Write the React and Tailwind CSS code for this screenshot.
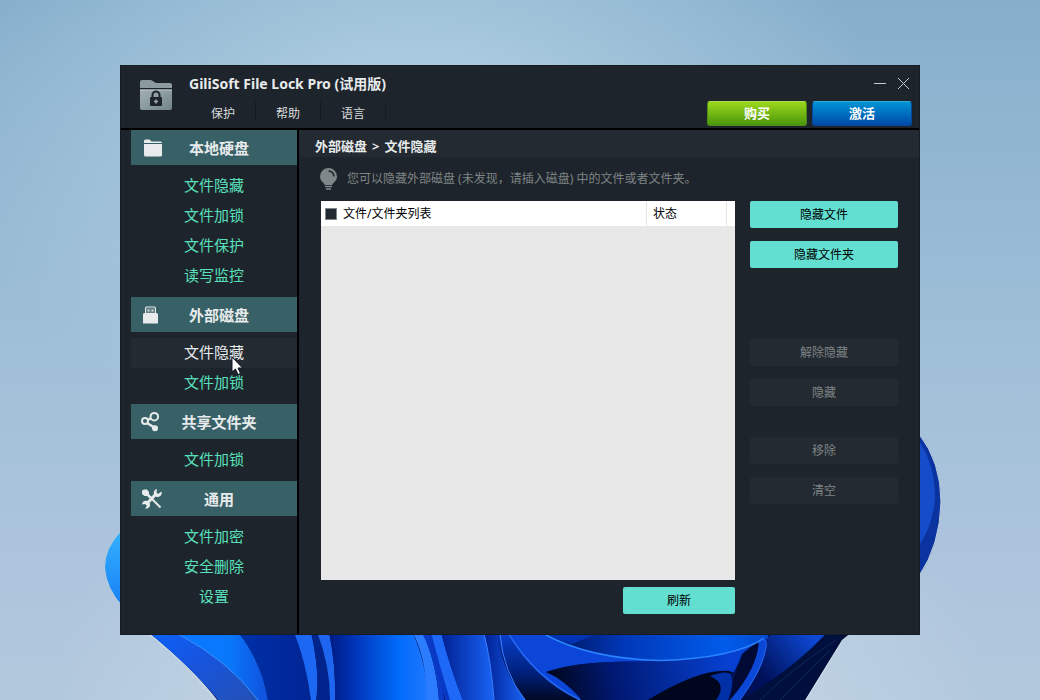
import React from "react";

const sections = [
  { title: "本地硬盘", icon: FolderIcon, items: ["文件隐藏", "文件加锁", "文件保护", "读写监控"] },
  { title: "外部磁盘", icon: UsbIcon, items: ["文件隐藏", "文件加锁"], active: 0 },
  { title: "共享文件夹", icon: ShareIcon, items: ["文件加锁"] },
  { title: "通用", icon: ToolsIcon, items: ["文件加密", "安全删除", "设置"] },
];

function FolderIcon() {
  return (
    <svg width="22" height="22" viewBox="0 0 22 22" fill="#e8ebec">
      <path d="M3 4Q3 2.500 4.500 2.500H8.500L10.500 4.500H19.500Q21 4.500 21 6H3Z" />
      <path d="M3 7H21V18Q21 19.500 19.500 19.500H4.500Q3 19.500 3 18Z" />
    </svg>
  );
}

function UsbIcon() {
  return (
    <svg width="22" height="22" viewBox="0 0 22 22" fill="#e8ebec">
      <path d="M4 10V4Q4 2.500 5.500 2.500H13.500Q15 2.500 15 4V10H14V4.500Q14 3.500 13 3.500H6Q5 3.500 5 4.500V10Z" />
      <path d="M5 4H14V9H5Z" opacity="0.25" />
      <path d="M6.500 5.500H8.500V7.500H6.500ZM10.500 5.500H12.500V7.500H10.500Z" opacity="0.8" />
      <path d="M2 10.500Q2 9 3.500 9H15.500Q17 9 17 10.500V19.500H2Z" />
    </svg>
  );
}

function ShareIcon() {
  return (
    <svg width="22" height="22" viewBox="0 0 22 22" fill="none" stroke="#e8ebec" strokeWidth="2">
      <circle cx="4" cy="10" r="3" />
      <circle cx="13.300" cy="5.700" r="3.800" />
      <circle cx="14" cy="17.300" r="3" fill="#e8ebec" stroke="none" />
      <path d="M6.500 9 10 7.300M6 12l6.500 4" strokeWidth="2.500" />
    </svg>
  );
}

function ToolsIcon() {
  return (
    <svg width="22" height="22" viewBox="0 0 22 22" fill="none" stroke="#e8ebec">
      <path d="M6 6 11.500 11.500" strokeWidth="2.500" />
      <path d="M11 11 19.500 19.500" strokeWidth="2" />
      <path d="M5.500 16 15.500 5.500" strokeWidth="3" />
      <path d="M1 3.500Q1 1.500 3.500 1.500H6L8 4V7L6.500 8H3.500L1 6Z" fill="#e8ebec" stroke="none" />
      <path d="M20.500 3.500A4 4 0 1 1 16 1L15.500 4.500 17 6Z" fill="#e8ebec" stroke="none" />
      <path d="M1 16.500A4 4 0 1 1 6.500 20.500H4L6 18 4 16Z" fill="#e8ebec" stroke="none" />
    </svg>
  );
}

function AppLogo() {
  return (
    <svg width="34" height="34" viewBox="0 0 34 34">
      <defs>
        <linearGradient id="logo" x1="0" y1="0" x2="1" y2="1">
          <stop offset="0" stopColor="#a3b0b3" />
          <stop offset="1" stopColor="#728589" />
        </linearGradient>
      </defs>
      <path d="M1 9V3Q1 1 3 1H12L17 4H31Q33 4 33 6V9Z" fill="#8c9a9e" />
      <path d="M1 10.500H33V29Q33 31 31 31H3Q1 31 1 29Z" fill="url(#logo)" />
      <path d="M1 11H33" stroke="#bcc7ca" />
      <path d="M13.500 19V16a3.500 3.500 0 0 1 7 0v3" fill="none" stroke="#1e242b" strokeWidth="2" />
      <rect x="11" y="18" width="12" height="9" rx="1" fill="#1e242b" />
      <path d="M17 20.500v4M15 22.500h4" stroke="#9cabad" strokeWidth="1.500" />
    </svg>
  );
}

function BulbIcon() {
  return (
    <svg className="shrink-0" width="19" height="24" viewBox="0 0 19 24">
      <path
        d="M9.500 1a8.500 8.500 0 0 1 8.500 8.500c0 3-1.500 4.500-3 6-1 1-1.500 1.500-1.700 2.500H5.700c-.2-1-.7-1.500-1.700-2.500-1.500-1.500-3-3-3-6A8.500 8.500 0 0 1 9.500 1Z"
        fill="#7f8789"
      />
      <path d="M9.500 4a5.500 5.500 0 0 1 5.500 5.500" fill="none" stroke="#1e242b" strokeWidth="1.500" />
      <path d="M6 19.500h7M7 22h5" stroke="#7f8789" strokeWidth="1.500" />
    </svg>
  );
}

/* Desktop background with the blue bloom */
function Wallpaper() {
  return (
    <svg className="absolute inset-0 h-full w-full" viewBox="0 0 1040 700" preserveAspectRatio="xMidYMid slice">
      <defs>
        <linearGradient id="sky" x1="0" y1="0" x2="0" y2="1">
          <stop offset="0" stopColor="#86afcc" />
          <stop offset="0.500" stopColor="#a0bfd8" />
          <stop offset="0.800" stopColor="#adc4dd" />
          <stop offset="1" stopColor="#b2c8dc" />
        </linearGradient>
        <radialGradient id="glow" cx="0.400" cy="0.200" r="0.450">
          <stop offset="0" stopColor="#b4d2e4" />
          <stop offset="1" stopColor="#b4d2e4" stopOpacity="0" />
        </radialGradient>
        <radialGradient id="floor" cx="0.500" cy="1" r="0.450">
          <stop offset="0.400" stopColor="#c4d6e6" />
          <stop offset="1" stopColor="#c4d6e6" stopOpacity="0" />
        </radialGradient>
        <linearGradient id="petalLeft" x1="0" y1="0" x2="0" y2="1">
          <stop offset="0" stopColor="#35b2ff" />
          <stop offset="1" stopColor="#1780f5" />
        </linearGradient>
        <linearGradient id="outer" x1="0" y1="0" x2="1" y2="1">
          <stop offset="0" stopColor="#0b62f8" />
          <stop offset="0.400" stopColor="#1655e0" />
          <stop offset="1" stopColor="#2450b4" />
        </linearGradient>
        <linearGradient id="bright" x1="190" y1="0" x2="268" y2="0" gradientUnits="userSpaceOnUse">
          <stop offset="0" stopColor="#0a78ff" />
          <stop offset="0.500" stopColor="#0a78fb" />
          <stop offset="1" stopColor="#1050dc" />
        </linearGradient>
        <linearGradient id="deep" x1="0" y1="0" x2="1" y2="0">
          <stop offset="0" stopColor="#0030a8" />
          <stop offset="1" stopColor="#002494" />
        </linearGradient>
        <linearGradient id="wide" x1="330" y1="0" x2="428" y2="0" gradientUnits="userSpaceOnUse">
          <stop offset="0" stopColor="#001c84" />
          <stop offset="0.250" stopColor="#0034b8" />
          <stop offset="0.700" stopColor="#006cfa" />
          <stop offset="1" stopColor="#2078ff" />
        </linearGradient>
        <linearGradient id="fold" x1="0" y1="0" x2="1" y2="0">
          <stop offset="0" stopColor="#002094" />
          <stop offset="1" stopColor="#1a64f6" />
        </linearGradient>
        <linearGradient id="sink" x1="0" y1="0" x2="0" y2="1">
          <stop offset="0" stopColor="#0a40d0" />
          <stop offset="0.600" stopColor="#00207c" />
          <stop offset="1" stopColor="#000824" />
        </linearGradient>
        <linearGradient id="lip" x1="545" y1="0" x2="770" y2="0" gradientUnits="userSpaceOnUse">
          <stop offset="0" stopColor="#001052" />
          <stop offset="0.350" stopColor="#0038b8" />
          <stop offset="0.800" stopColor="#005cea" />
          <stop offset="1" stopColor="#0048cc" />
        </linearGradient>
        <linearGradient id="cave" x1="550" y1="690" x2="725" y2="655" gradientUnits="userSpaceOnUse">
          <stop offset="0" stopColor="#00061c" />
          <stop offset="0.350" stopColor="#001870" />
          <stop offset="1" stopColor="#0640d0" />
        </linearGradient>
        <linearGradient id="right" x1="765" y1="680" x2="815" y2="640" gradientUnits="userSpaceOnUse">
          <stop offset="0" stopColor="#001058" />
          <stop offset="1" stopColor="#0c48d4" />
        </linearGradient>
      </defs>
      <rect width="1040" height="700" fill="url(#sky)" />
      <rect width="1040" height="700" fill="url(#glow)" />
      <rect width="1040" height="700" fill="url(#floor)" />
      <path d="M122 530Q104 548 104.500 568 106 588 122 606Z" fill="url(#petalLeft)" stroke="#b8cbd6" />
      <path d="M919 434Q941 462 941 502 940 545 919 576Z" fill="#0a339f" stroke="#c0d0e0" />
      <path d="M919 441Q935 465 935 498 933 525 919 546Z" fill="#144cc9" />

      <path d="M147 632Q192 668 217 701H805L842 640 852 632Z" fill="#001458" stroke="#d4dee6" strokeWidth="1.500" />
      <path d="M148 632Q192 668 218 700H262Q230 660 178 632Z" fill="url(#outer)" />
      <path d="M176 632Q232 664 258 700H268Q262 662 238 632Z" fill="url(#bright)" />
      <path d="M178 634Q228 660 258 700" fill="none" stroke="#3a94ff" />
      <path d="M238 632Q262 662 268 700H312Q314 672 294 632Z" fill="url(#deep)" />
      <path d="M294 632Q306 662 311 700H317Q320 672 311 632Z" fill="#1c68f2" />
      <path d="M311 632Q320 672 316 700H331Q330 665 317 632Z" fill="#00248c" />
      <path d="M317 632Q330 665 330 700H335Q336 665 329 632Z" fill="#1e66f0" />
      <path d="M329 632Q336 665 335 700H428Q426 660 412 632Z" fill="url(#wide)" />
      <path d="M412 632Q426 655 427 700H439Q436 660 422 632Z" fill="#2c7cff" />
      <path d="M422 632Q436 660 439 700H444Q442 665 430 632Z" fill="#0a3cc8" />
      <path d="M430 632Q438 660 449 700H463Q450 668 441 632Z" fill="#1e68f8" />
      <path d="M427 632Q436 665 445 700H450Q438 660 431 632Z" fill="#0838c4" />
      <path d="M441 632Q450 668 463 700H494Q490 655 484 632Z" fill="url(#fold)" />
      <path d="M484 632Q490 655 494 700H526Q500 670 498 632Z" fill="url(#fold)" />
      <path d="M498 632Q502 672 526 700H584Q535 680 509 632Z" fill="url(#sink)" />
      <path d="M509 632Q535 680 582 700 560 676 546 672 580 660 640 662L680 660Q590 660 543 632Z" fill="#0b46d8" />
      <path d="M543 632Q590 660 660 661 740 658 768 638V632Z" fill="url(#lip)" />
      <path d="M572 644 602 632H543Q556 640 572 644Z" fill="#0034b4" />
      <path d="M546 672Q580 660 660 661 720 658 752 645 740 658 734 672 705 668 648 700H582Q565 680 546 672Z" fill="url(#cave)" />
      <path d="M648 700Q700 668 730 671 736 680 728 700Z" fill="#00061e" />
      <path d="M710 676Q726 670 731 674 735 684 728 700H716Q728 684 710 676Z" fill="#0030a8" />
      <path d="M730 700Q732 680 742 654L758 641Q762 655 734 700Z" fill="#000a34" />
      <path d="M730 700Q758 668 759 640L766 640Q770 664 740 700Z" fill="#0c48d8" />
      <path d="M740 700Q768 664 766 640L772 632H828Q786 676 740 700Z" fill="url(#right)" />
      <path d="M740 700Q790 672 828 632H852L842 640 805 700Z" fill="#000f3c" />
      <path d="M544 634Q590 659 660 660.500 735 658 764 638" fill="none" stroke="#2a84ff" strokeWidth="1.500" />
      <path d="M509 634Q535 678 580 700" fill="none" stroke="#2468f4" strokeWidth="1.500" />
      <path d="M500 634Q503 672 525 700M484 634Q491 660 494 700" fill="none" stroke="#3a80ff" />
      <path d="M760 639Q768 638 766 648 762 670 740 700" fill="none" stroke="#2a64ea" />
      <path d="M760 700Q790 670 836 640M780 700 830 650" fill="none" stroke="#10285c" />
    </svg>
  );
}

function Cursor() {
  return (
    <svg className="pointer-events-none absolute -bottom-2 left-[100px] z-10" width="13" height="20" viewBox="0 0 13 20">
      <path d="M1 1V16L4.500 13 7 18.500 9.500 17.500 7 12H11.500Z" fill="#fff" stroke="#11152a" />
    </svg>
  );
}

function ActionButton({ children, disabled, className = "" }) {
  const tone = disabled ? "bg-[#232a31] text-[#7f8486]" : "bg-[#62dfd0] text-black";
  return (
    <button disabled={disabled} className={`h-[27px] rounded-[2px] pt-px text-xs ${tone} ${className}`}>
      {children}
    </button>
  );
}

function Header() {
  const menus = ["保护", "帮助", "语言"];
  return (
    <header className="flex h-[64px] border-b-2 border-black">
      <div className="flex w-[68px] shrink-0 justify-end pt-[13px] pr-4">
        <AppLogo />
      </div>
      <div className="pt-2">
        <h1 className="h-[27px] text-sm leading-5 font-bold text-[#e8ebec]">GiliSoft File Lock Pro (试用版)</h1>
        <nav className="flex pl-0.5">
          {menus.map((menu) => (
            <div key={menu} className="flex">
              <button className="h-6 w-16 pt-px text-xs">{menu}</button>
              <span className="h-5 w-px bg-[#171b20]" />
            </div>
          ))}
        </nav>
      </div>
      <div className="ml-auto flex flex-col items-end pt-2 pr-[7px]">
        <div className="flex h-[27px] gap-2">
          <button aria-label="最小化" className="h-5 w-4">
            <svg width="16" height="20" viewBox="0 0 16 20" stroke="#c5cacc">
              <path d="M2 9.500H14" />
            </svg>
          </button>
          <button aria-label="关闭" className="h-5 w-4">
            <svg width="16" height="20" viewBox="0 0 16 20" stroke="#c5cacc">
              <path d="M2 4 13 15M13 4 2 15" />
            </svg>
          </button>
        </div>
        <div className="flex gap-[5px] text-[13px] font-bold text-white">
          <button className="h-[25px] w-[100px] rounded-[3px] border border-[#4d8c18] border-t-[#a5d84c] bg-linear-to-b from-[#9bd81c] to-[#4a970c]">
            购买
          </button>
          <button className="h-[25px] w-[100px] rounded-[3px] border border-[#08479c] border-t-[#30a8d8] bg-linear-to-b from-[#0293d4] to-[#034aa8]">
            激活
          </button>
        </div>
      </div>
    </header>
  );
}

function Sidebar() {
  return (
    <aside className="w-[178px] shrink-0 border-r-2 border-black pl-[10px]">
      {sections.map(({ title, icon: Icon, items, active }) => (
        <section key={title}>
          <h2 className="flex h-[35px] items-center bg-[#386167] pl-[10px] text-[15px] font-bold text-[#e8ebec]">
            <Icon />
            <span className="flex-1 pt-0.5 pr-[22px] text-center">{title}</span>
          </h2>
          <ul className="py-[6px]">
            {items.map((item, i) => (
              <li key={item} className={i === active ? "relative bg-[#232a31] text-[#e8ebec]" : "text-[#58e0bd]"}>
                <button className="h-[30px] w-full pb-0.5 text-[15px]">{item}</button>
                {i === active && <Cursor />}
              </li>
            ))}
          </ul>
        </section>
      ))}
    </aside>
  );
}

function FileTable() {
  return (
    <div className="min-h-[379px] flex-1 bg-[#e8e8e8]">
      <table className="w-full table-fixed border-separate border-spacing-0 text-left text-xs text-black">
        <thead>
          <tr className="h-[25px] bg-white">
            <th className="border-r border-[#e4e4e4] p-0 font-normal">
              <label className="flex items-center gap-[6px] pt-px pl-1">
                <input
                  type="checkbox"
                  className="size-3 appearance-none border border-[#7f8789] bg-[#232a31] checked:bg-[#62dfd0]"
                />
                文件/文件夹列表
              </label>
            </th>
            <th className="w-20 border-r border-[#e4e4e4] p-0 pt-px pl-[6px] font-normal">状态</th>
            <th className="w-2 p-0" />
          </tr>
        </thead>
      </table>
    </div>
  );
}

export default function App() {
  return (
    <div className="relative flex min-h-screen items-center justify-center font-['Noto_Sans','Noto_Sans_CJK_SC',sans-serif]">
      <Wallpaper />
      <div className="relative w-full max-w-[800px] border border-[#171c22] bg-[#1e242b] text-[#d8dcde]">
        <Header />
        <div className="flex min-h-[504px]">
          <Sidebar />
          <main className="flex-1">
            <div className="flex h-[27px] gap-[5px] bg-[#232a31] pt-1.5 pl-4 text-[13px] leading-5 font-bold text-[#e8ebec]">
              <span>外部磁盘</span>
              <span>&gt;</span>
              <span>文件隐藏</span>
            </div>
            <p className="flex h-[44px] items-center gap-[9px] pl-5 text-xs text-[#7f8486]">
              <BulbIcon />
              您可以隐藏外部磁盘 (未发现，请插入磁盘) 中的文件或者文件夹。
            </p>
            <div className="flex gap-[15px] pr-[21px] pl-[22px]">
              <div className="flex flex-1 flex-col gap-[7px]">
                <FileTable />
                <ActionButton className="w-28 self-end">刷新</ActionButton>
              </div>
              <div className="flex w-[148px] flex-col gap-[13px]">
                <ActionButton>隐藏文件</ActionButton>
                <ActionButton>隐藏文件夹</ActionButton>
                <ActionButton disabled className="mt-[58px]">解除隐藏</ActionButton>
                <ActionButton disabled>隐藏</ActionButton>
                <ActionButton disabled className="mt-[18px]">移除</ActionButton>
                <ActionButton disabled>清空</ActionButton>
              </div>
            </div>
          </main>
        </div>
      </div>
    </div>
  );
}
